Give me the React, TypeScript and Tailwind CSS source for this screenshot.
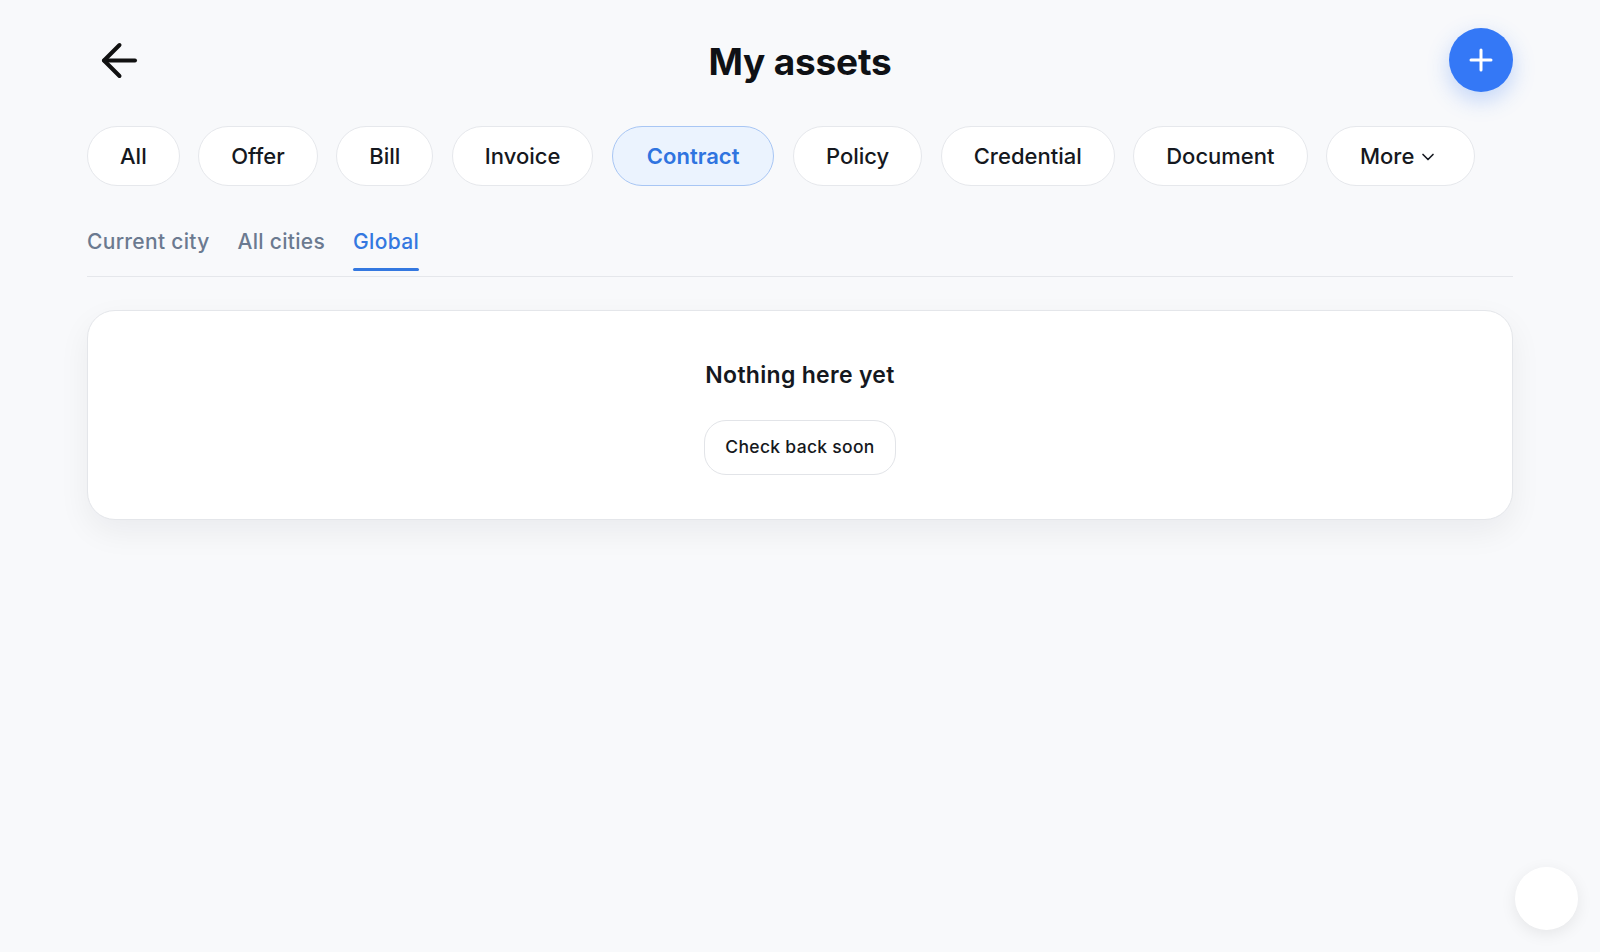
import { ChevronDown } from 'lucide-react';

const chips = ['All', 'Offer', 'Bill', 'Invoice', 'Contract', 'Policy', 'Credential', 'Document'];
const tabs = ['Current city', 'All cities', 'Global'];

function BackArrow() {
  return (
    <svg width="38" height="38" viewBox="0 0 38 38" fill="none" stroke="#111111" strokeWidth="4" strokeLinecap="round" strokeLinejoin="round">
      <path d="M35 19.5H4" />
      <path d="M19.5 4 4 19.5 19.5 35" />
    </svg>
  );
}

export default function App() {
  const activeChip = 'Contract';
  const activeTab = 'Global';

  return (
    <div className="min-h-[952px] w-full bg-[#f8f9fb] font-['Inter','Liberation_Sans',sans-serif] text-[#111827]">
      <div className="px-[87px] pt-[28px]">
        {/* header */}
        <div className="flex items-center justify-between">
          <button className="flex h-[64px] w-[64px] items-center justify-center">
            <BackArrow />
          </button>
          <h1 className="mt-[3px] text-[37px] font-bold tracking-[-0.2px] text-[#0f1115]">My assets</h1>
          <button className="flex h-[64px] w-[64px] items-center justify-center rounded-full bg-[#3478f6] shadow-[0_8px_22px_rgba(52,120,246,0.28)]">
            <svg width="26" height="26" viewBox="0 0 26 26" fill="none" stroke="white" strokeWidth="3" strokeLinecap="round">
              <path d="M13 3v20M3 13h20" />
            </svg>
          </button>
        </div>

        {/* filter chips */}
        <div className="mt-[34px] flex gap-[18.5px]">
          {chips.map((c) => (
            <button
              key={c}
              className={
                c === activeChip
                  ? 'h-[60px] rounded-full border border-[#a8c6f4] bg-[#ebf3fe] px-[34px] text-[22px] font-semibold text-[#2f74e0]'
                  : 'h-[60px] rounded-full border border-[#e6e8ec] bg-white px-[32px] text-[22px] font-medium text-[#151820]'
              }
            >
              {c}
            </button>
          ))}
          <button className="flex h-[60px] items-center rounded-full border border-[#e6e8ec] bg-white pl-[33px] pr-[36px] text-[22px] font-medium text-[#151820]">
            More
            <ChevronDown size={20} strokeWidth={2} className="ml-[4px] mt-[2px]" />
          </button>
        </div>

        {/* scope tabs */}
        <div className="mt-[42px] flex gap-[28px] border-b border-[#e5e7eb] pb-[5px]">
          {tabs.map((t) => (
            <div key={t} className="flex flex-col">
              <span className={t === activeTab ? 'text-[21px] font-medium leading-[28px] tracking-[0.3px] text-[#3478e0]' : 'text-[21px] font-medium leading-[28px] tracking-[0.3px] text-[#6b7a90]'}>
                {t}
              </span>
              <span className={t === activeTab ? 'mt-[12px] h-[3px] rounded-full bg-[#3478e0]' : 'mt-[12px] h-[3px]'} />
            </div>
          ))}
        </div>

        {/* empty state card */}
        <div className="mt-[33px] flex flex-col items-center rounded-[28px] border border-[#e4e6ea] bg-white pb-[44px] pt-[50px] shadow-[0_12px_32px_rgba(15,23,42,0.06)]">
          <p className="text-[23px] font-semibold leading-[28px] tracking-[0.3px] text-[#151820]">Nothing here yet</p>
          <button className="mt-[31px] h-[55px] rounded-[22px] border border-[#e2e4e8] bg-white px-[20px] text-[17.5px] font-medium tracking-[0.3px] text-[#151820]">
            Check back soon
          </button>
        </div>
      </div>

      <div className="fixed bottom-[22px] right-[22px] h-[63px] w-[63px] rounded-full bg-white shadow-[0_4px_16px_rgba(0,0,0,0.08)]" />
    </div>
  );
}
